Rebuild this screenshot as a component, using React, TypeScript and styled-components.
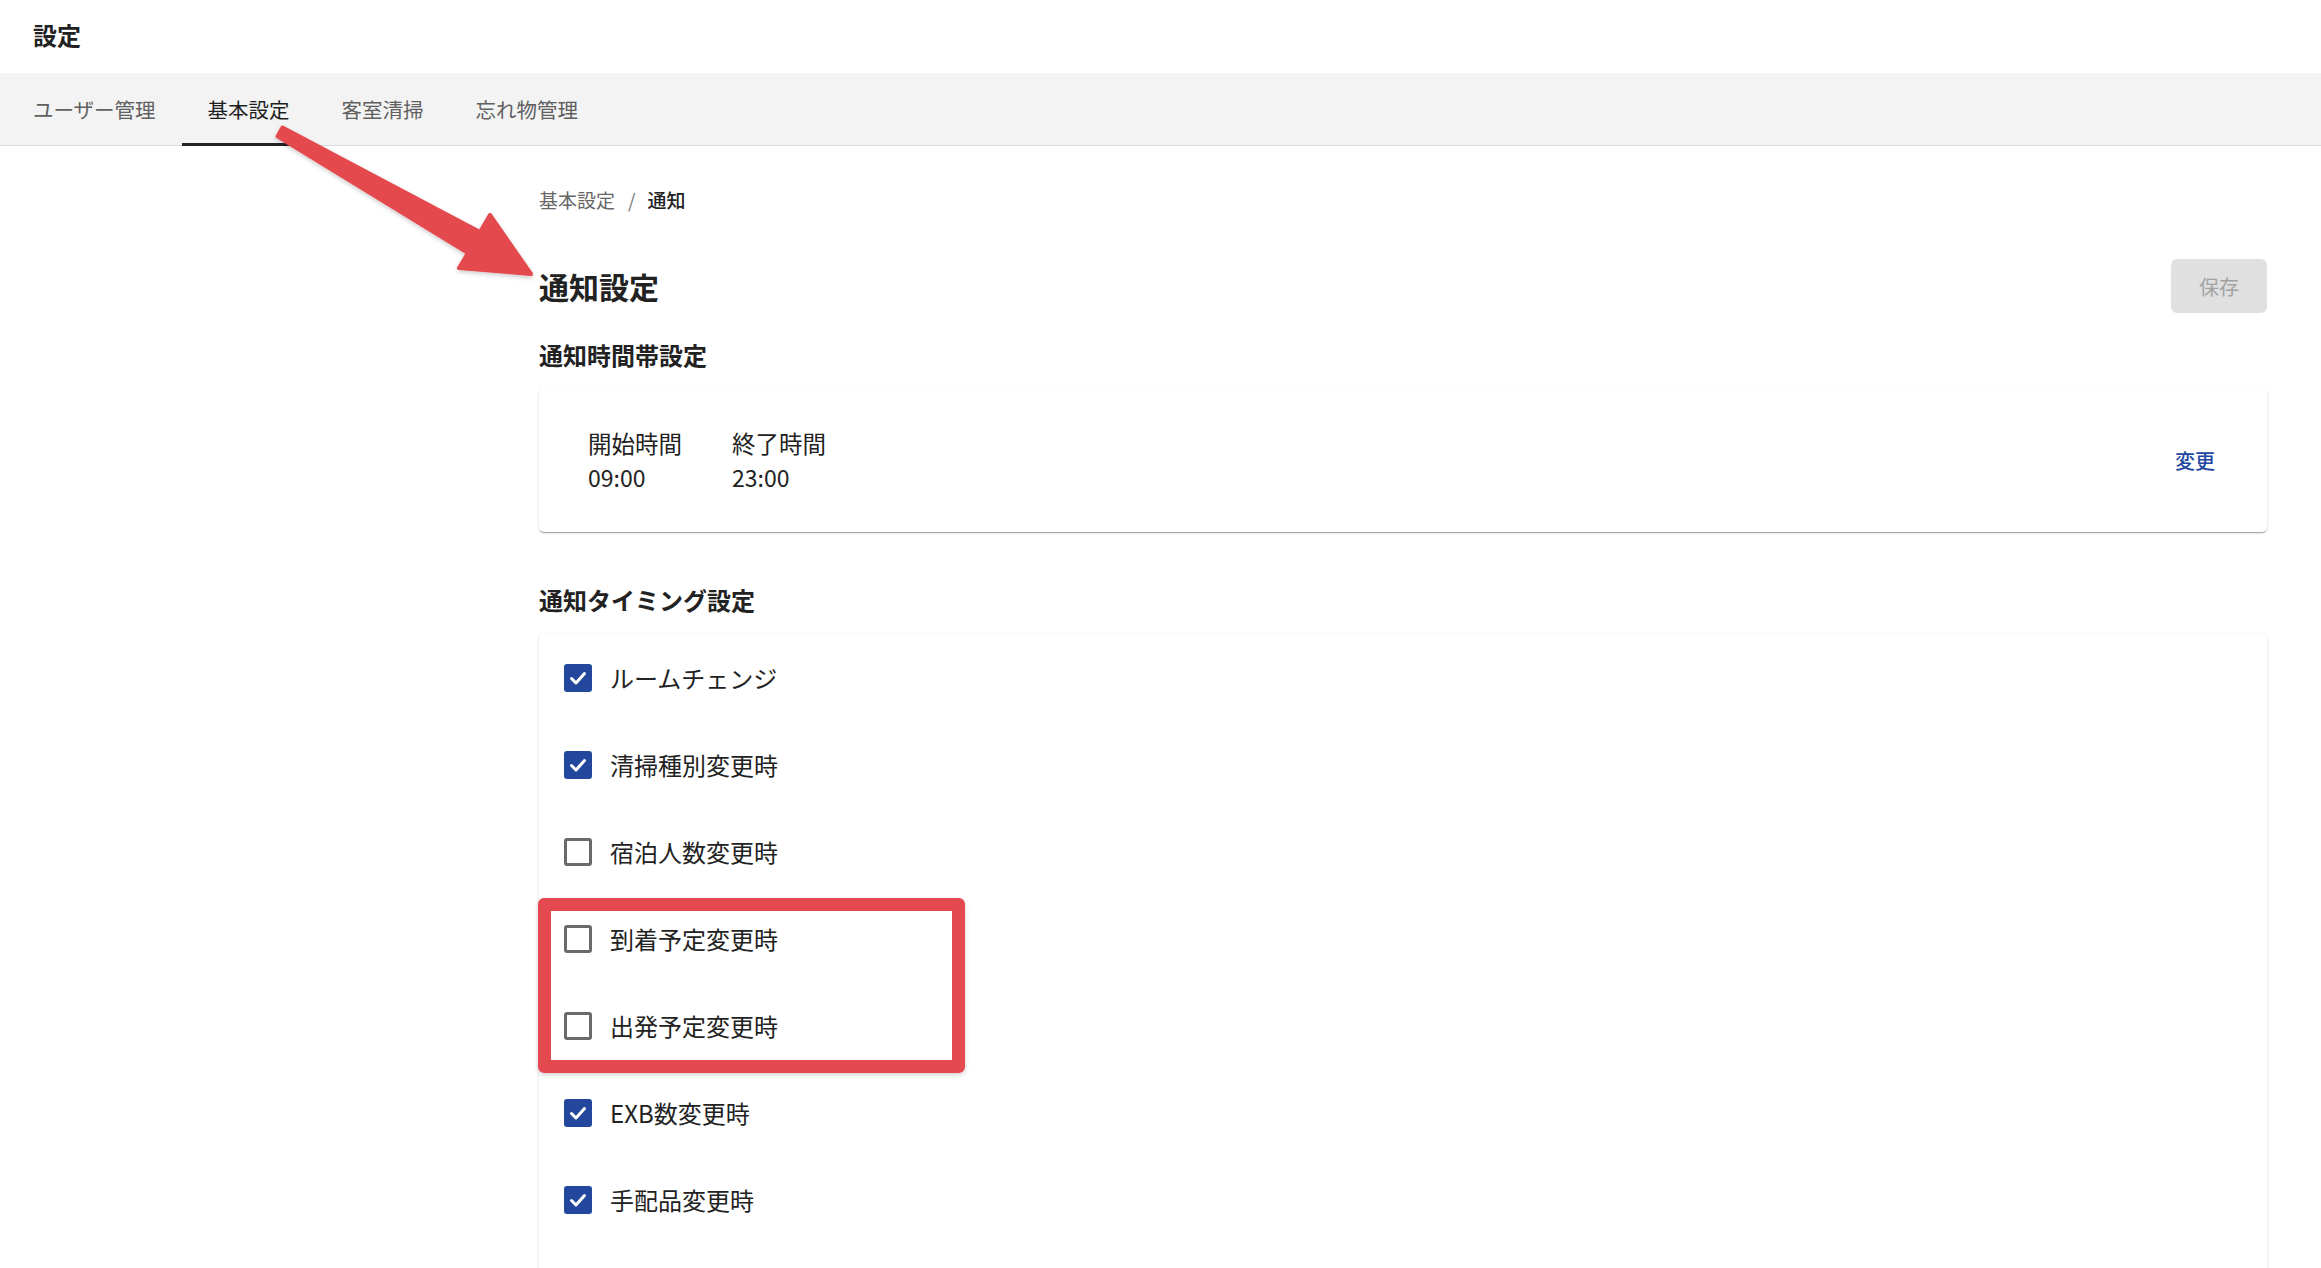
import React from "react";
import styled, { createGlobalStyle } from "styled-components";

const GlobalStyle = createGlobalStyle`
  html, body {
    margin: 0;
    padding: 0;
    overflow: hidden;
    background: #ffffff;
  }
  body {
    font-family: "Noto Sans CJK JP", "Noto Sans", "Liberation Sans", sans-serif;
    color: #212121;
  }
  *, *::before, *::after { box-sizing: border-box; }
`;

const Page = styled.div`
  position: relative;
  min-height: 100vh;
`;

const TopBar = styled.header`
  height: 73px;
  display: flex;
  align-items: center;
  padding: 0 0 4px 33px;
`;

const AppTitle = styled.h1`
  margin: 0;
  font-size: 24px;
  font-weight: 700;
  color: #222;
  line-height: 1;
`;

const TabBar = styled.nav`
  height: 73px;
  display: flex;
  align-items: stretch;
  padding-left: 7px;
  background: #f3f3f3;
  border-bottom: 1px solid #dcdcdc;
`;

const Tab = styled.div<{ $active?: boolean }>`
  display: flex;
  align-items: center;
  padding: 1px 26px 0;
  font-size: 20.5px;
  color: ${(p) => (p.$active ? "#1f1f1f" : "#606060")};
  border-bottom: 3px solid ${(p) => (p.$active ? "#222" : "transparent")};
  margin-bottom: -1px;
  white-space: nowrap;
`;

const Main = styled.main`
  padding: 40px 54px 0 539px;
  display: flex;
  flex-direction: column;
`;

const Breadcrumb = styled.div`
  display: flex;
  align-items: center;
  font-size: 19px;
  line-height: 28px;
  color: #666;
`;

const Crumb = styled.span<{ $current?: boolean }>`
  color: ${(p) => (p.$current ? "#222" : "#666")};
  font-weight: ${(p) => (p.$current ? 500 : 400)};
`;

const CrumbSep = styled.span`
  margin: 0 12px 0 13px;
  color: #777;
`;

const HeaderRow = styled.div`
  margin-top: 45px;
  height: 54px;
  display: flex;
  align-items: center;
  justify-content: space-between;
`;

const PageTitle = styled.h2`
  margin: 0;
  font-size: 30px;
  font-weight: 700;
  color: #222;
  line-height: 1;
`;

const SaveButton = styled.button`
  width: 96px;
  height: 54px;
  border: none;
  border-radius: 6px;
  background: #e0e0e0;
  color: #a3a3a3;
  font-family: inherit;
  font-size: 20px;
  cursor: default;
`;

const SectionTitle = styled.h3<{ $gap: number }>`
  margin: ${(p) => p.$gap}px 0 16px;
  font-size: 24px;
  line-height: 34px;
  font-weight: 700;
  color: #222;
`;

const Card = styled.section`
  background: #fff;
  border-radius: 5px;
  box-shadow: 0 2px 1px -1px rgba(0, 0, 0, 0.2), 0 1px 1px 0 rgba(0, 0, 0, 0.14),
    0 1px 3px 0 rgba(0, 0, 0, 0.12);
`;

const TimeCard = styled(Card)`
  height: 144px;
  display: flex;
  align-items: center;
  justify-content: space-between;
  padding: 0 52px 0 49px;
`;

const TimeGroup = styled.div`
  display: flex;
  gap: 50px;
`;

const TimeField = styled.div`
  display: flex;
  flex-direction: column;
  font-size: 23.5px;
  line-height: 34px;
  color: #222;
`;

const TimeValue = styled.span`
  font-size: 23px;
`;

const LinkButton = styled.button`
  border: none;
  background: none;
  padding: 0;
  font-family: inherit;
  font-size: 20px;
  font-weight: 500;
  color: #1e47a0;
  cursor: pointer;
`;

const ListCard = styled(Card)`
  padding: 1px 0 120px;
`;

const Row = styled.label`
  height: 87px;
  display: flex;
  align-items: center;
  gap: 18px;
  padding-left: 25px;
  font-size: 24px;
  color: #222;
`;

const Box = styled.span<{ $checked: boolean }>`
  width: 28px;
  height: 28px;
  border-radius: 3px;
  display: inline-flex;
  align-items: center;
  justify-content: center;
  background: ${(p) => (p.$checked ? "#22479c" : "#fff")};
  border: ${(p) => (p.$checked ? "none" : "3px solid #6a6a6a")};
  flex-shrink: 0;
`;

const Highlight = styled.div`
  position: relative;
  &::after {
    content: "";
    position: absolute;
    top: 3px;
    bottom: -4px;
    left: -1px;
    width: 427px;
    border: 13px solid #e3494e;
    border-radius: 6px;
    box-shadow: 0 2px 5px rgba(0, 0, 0, 0.18);
    pointer-events: none;
  }
`;

const ArrowLayer = styled.svg`
  position: absolute;
  left: 0;
  top: 0;
  pointer-events: none;
  overflow: visible;
`;

type Item = { label: string; checked: boolean };

const CheckRow = ({ label, checked }: Item) => (
  <Row>
    <Box $checked={checked}>
      {checked && (
        <svg width="20" height="20" viewBox="0 0 20 20">
          <path
            d="M3.5 10.5 L8 15 L16.5 5.5"
            fill="none"
            stroke="#fff"
            strokeWidth="3"
            strokeLinecap="round"
            strokeLinejoin="round"
          />
        </svg>
      )}
    </Box>
    {label}
  </Row>
);

const topItems: Item[] = [
  { label: "ルームチェンジ", checked: true },
  { label: "清掃種別変更時", checked: true },
  { label: "宿泊人数変更時", checked: false },
];

const markedItems: Item[] = [
  { label: "到着予定変更時", checked: false },
  { label: "出発予定変更時", checked: false },
];

const bottomItems: Item[] = [
  { label: "EXB数変更時", checked: true },
  { label: "手配品変更時", checked: true },
];

const tabs = ["ユーザー管理", "基本設定", "客室清掃", "忘れ物管理"];

export default function App() {
  return (
    <Page>
      <GlobalStyle />
      <TopBar>
        <AppTitle>設定</AppTitle>
      </TopBar>
      <TabBar>
        {tabs.map((t) => (
          <Tab key={t} $active={t === "基本設定"}>
            {t}
          </Tab>
        ))}
      </TabBar>
      <Main>
        <Breadcrumb>
          <Crumb>基本設定</Crumb>
          <CrumbSep>/</CrumbSep>
          <Crumb $current>通知</Crumb>
        </Breadcrumb>
        <HeaderRow>
          <PageTitle>通知設定</PageTitle>
          <SaveButton disabled>保存</SaveButton>
        </HeaderRow>

        <SectionTitle $gap={25}>通知時間帯設定</SectionTitle>
        <TimeCard>
          <TimeGroup>
            <TimeField>
              開始時間
              <TimeValue>09:00</TimeValue>
            </TimeField>
            <TimeField>
              終了時間
              <TimeValue>23:00</TimeValue>
            </TimeField>
          </TimeGroup>
          <LinkButton>変更</LinkButton>
        </TimeCard>

        <SectionTitle $gap={51}>通知タイミング設定</SectionTitle>
        <ListCard>
          {topItems.map((it) => (
            <CheckRow key={it.label} {...it} />
          ))}
          <Highlight>
            {markedItems.map((it) => (
              <CheckRow key={it.label} {...it} />
            ))}
          </Highlight>
          {bottomItems.map((it) => (
            <CheckRow key={it.label} {...it} />
          ))}
        </ListCard>
      </Main>

      <ArrowLayer width="600" height="320" viewBox="0 0 600 320">
        <defs>
          <filter id="arrowShadow" x="-20%" y="-20%" width="140%" height="140%">
            <feDropShadow dx="0" dy="2" stdDeviation="2" floodColor="#000" floodOpacity="0.2" />
          </filter>
        </defs>
        <polygon
          points="282.5,127.6 277.5,136.4 468,253 459,268 531,274 490,215 480,232"
          fill="#e3494e"
          stroke="#e3494e"
          strokeWidth="4"
          strokeLinejoin="round"
          filter="url(#arrowShadow)"
        />
      </ArrowLayer>
    </Page>
  );
}
